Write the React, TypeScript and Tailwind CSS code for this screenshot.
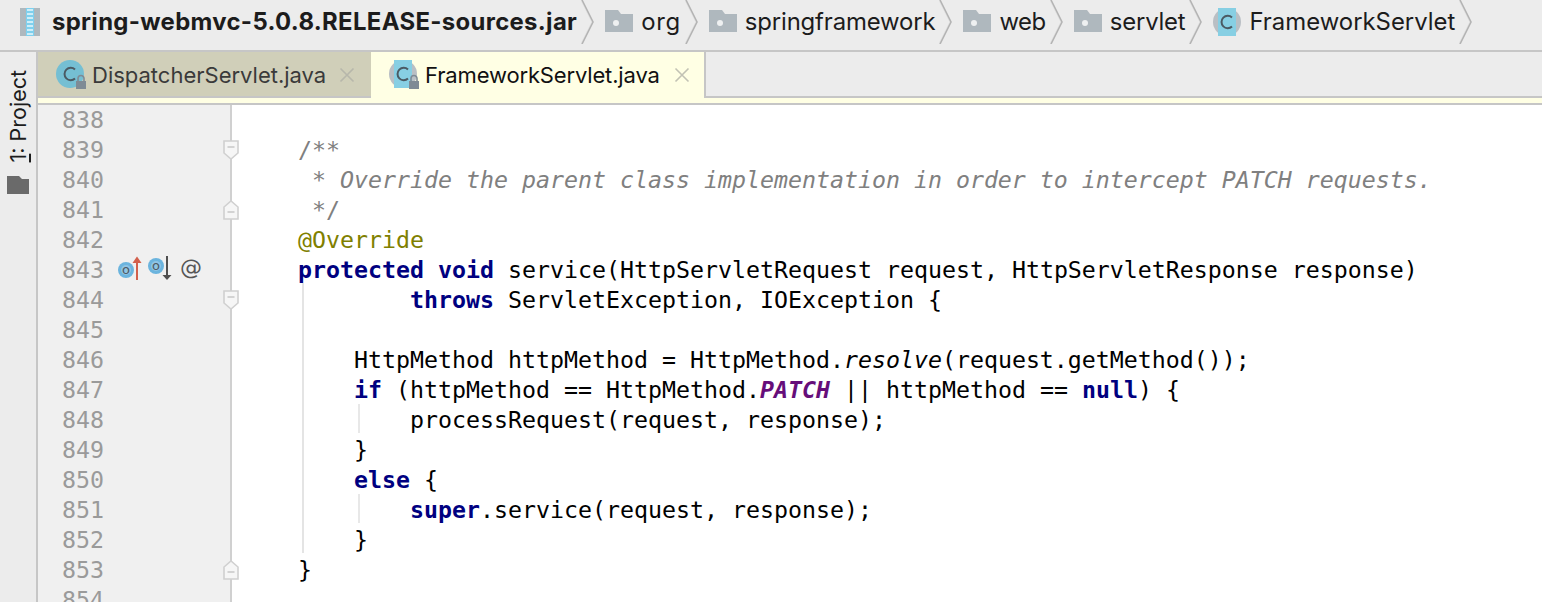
const mono = "font-['DejaVu_Sans_Mono',monospace]";

type Seg = { t: string; c?: string };

const kw = 'font-bold text-[#000080]';
const cm = 'italic text-[#808080]';

const lines: Seg[][] = [
  [],
  [{ t: '    /**', c: 'text-[#808080]' }],
  [{ t: '     * Override the parent class implementation in order to intercept PATCH requests.', c: cm }],
  [{ t: '     */', c: 'text-[#808080]' }],
  [{ t: '    @Override', c: 'text-[#808000]' }],
  [{ t: '    ' }, { t: 'protected void', c: kw }, { t: ' service(HttpServletRequest request, HttpServletResponse response)' }],
  [{ t: '            ' }, { t: 'throws', c: kw }, { t: ' ServletException, IOException {' }],
  [],
  [{ t: '        HttpMethod httpMethod = HttpMethod.' }, { t: 'resolve', c: 'italic' }, { t: '(request.getMethod());' }],
  [{ t: '        ' }, { t: 'if', c: kw }, { t: ' (httpMethod == HttpMethod.' }, { t: 'PATCH', c: 'font-bold italic text-[#660e7a]' }, { t: ' || httpMethod == ' }, { t: 'null', c: kw }, { t: ') {' }],
  [{ t: '            processRequest(request, response);' }],
  [{ t: '        }' }],
  [{ t: '        ' }, { t: 'else', c: kw }, { t: ' {' }],
  [{ t: '            ' }, { t: 'super', c: kw }, { t: '.service(request, response);' }],
  [{ t: '        }' }],
  [{ t: '    }' }],
  [],
];

const ClassIcon = ({ half = false }: { half?: boolean }) => (
  <svg width="36" height="32" viewBox="0 0 36 32" className="shrink-0 mt-[2px]">
    {half ? (
      <>
        <circle cx="14" cy="14" r="14" fill="#b9bfc4" />
        <rect x="5" y="0" width="18" height="28" fill="#87cfe3" />
      </>
    ) : (
      <circle cx="14" cy="14" r="14" fill="#75bfd3" />
    )}
    <path d="M19 9.500a6.200 6.200 0 1 0 0 9" fill="none" stroke="#4b5a63" strokeWidth="2" />
    <rect x="20" y="21" width="10" height="8" fill="#7f8b95" />
    <path d="M22 21v-2.500a3 3 0 0 1 6 0V21" fill="none" stroke="#7f8b95" strokeWidth="1.6" />
  </svg>
);

const PlainClassIcon = () => (
  <svg width="28" height="28" viewBox="0 0 28 28" className="shrink-0">
    <circle cx="14" cy="14" r="14" fill="#b9bfc4" />
    <rect x="5" y="0" width="18" height="28" fill="#87cfe3" />
    <path d="M19 9.500a6.200 6.200 0 1 0 0 9" fill="none" stroke="#4b5a63" strokeWidth="2" />
  </svg>
);

const FolderIcon = () => (
  <svg width="28" height="22" viewBox="0 0 28 22" className="shrink-0 mb-[2px]">
    <path d="M0 0h13l3 4h12v18H0z" fill="#afb8be" />
    <circle cx="11" cy="13" r="3" fill="#eef0f1" />
  </svg>
);

const Chevron = () => (
  <svg width="14" height="44" viewBox="0 0 14 44" className="shrink-0 self-start ml-[-4px] mr-[2px]">
    <path d="M1 0l11 22L1 44" fill="none" stroke="#e2e2e2" strokeWidth="1.2" transform="translate(-1 0)" />
    <path d="M1 0l11 22L1 44" fill="none" stroke="#b4b4b4" strokeWidth="1.6" />
  </svg>
);

const CloseX = ({ color }: { color: string }) => (
  <svg width="16" height="16" viewBox="0 0 16 16" className="shrink-0">
    <path d="M1.500 1.500l13 13M14.500 1.500l-13 13" stroke={color} strokeWidth="1.6" />
  </svg>
);

const Crumb = ({ icon, label, className }: { icon: React.ReactNode; label: string; className?: string }) => (
  <>
    {icon}
    <span className={`text-[#1c1c1c] ${className ?? ''}`}>{label}</span>
    <Chevron />
  </>
);

const FoldMark = ({ up, top }: { up?: boolean; top: string }) => (
  <svg width="16" height="20" viewBox="0 0 16 20" className={`absolute left-[185px] ${top}`}>
    <path
      d={up ? 'M1 19V7l7-6 7 6v12z' : 'M1 1v12l7 6 7-6V1z'}
      fill="#f6f6f6"
      stroke="#d0d0d0"
      strokeWidth="1.6"
    />
    <path d={up ? 'M4.500 12h7' : 'M4.500 7h7'} stroke="#c4c4c4" strokeWidth="1.4" />
  </svg>
);

const GutterIcons = () => (
  <div className="flex items-center absolute left-[80px] top-0 h-[30px]">
    <svg width="66" height="30" viewBox="0 0 66 30">
      <circle cx="8" cy="15" r="8" fill="#6bb4de" />
      <circle cx="8" cy="15" r="5" fill="#8fc4e4" />
      <text x="8" y="19" fontSize="13" fill="#4d5a63" textAnchor="middle" fontFamily="DejaVu Sans">o</text>
      <path d="M19 25V7" stroke="#d2604c" strokeWidth="2" />
      <path d="M14.500 8L19 1.500 23.500 8z" fill="#d2604c" />
      <circle cx="38" cy="11" r="8" fill="#6bb4de" />
      <circle cx="38" cy="11" r="5" fill="#8fc4e4" />
      <text x="38" y="15" fontSize="13" fill="#4d5a63" textAnchor="middle" fontFamily="DejaVu Sans">o</text>
      <path d="M49 1v20" stroke="#4f4f4f" strokeWidth="2" />
      <path d="M44.500 20L49 25l4.500-5z" fill="#4f4f4f" />
    </svg>
    <span className="font-['DejaVu_Sans',sans-serif] text-[22px] leading-[30px] text-[#555555] ml-[-4px] mt-[-4px]">@</span>
  </div>
);

export default function App() {
  return (
    <div className="flex flex-col h-[602px] w-[1542px] overflow-hidden bg-white font-['Inter',sans-serif]">
      {/* Breadcrumbs */}
      <div className="flex items-center h-[44px] shrink-0 pl-[20px] pb-[6px] gap-[8px] text-[23.9px] bg-[#ececec] border-b-2 border-[#c6c6c6] box-content">
        <svg width="20" height="28" viewBox="0 0 20 28" className="shrink-0 mr-[4px]">
          <rect width="20" height="28" fill="#aeb8be" />
          <rect x="6" width="8" height="28" fill="#7fd0ee" />
          <path d="M7 2h6M7 6h6M7 10h6M7 14h6M7 18h6M7 22h6M7 26h6" stroke="#eaf7fc" strokeWidth="1.5" />
        </svg>
        <Crumb icon={null} label="spring-webmvc-5.0.8.RELEASE-sources.jar" className="font-bold tracking-[0.33px]" />
        <Crumb icon={<FolderIcon />} label="org" className="tracking-[0.7px]" />
        <Crumb icon={<FolderIcon />} label="springframework" className="tracking-[-0.15px]" />
        <Crumb icon={<FolderIcon />} label="web" className="tracking-[-0.4px]" />
        <Crumb icon={<FolderIcon />} label="servlet" className="tracking-[-0.2px]" />
        <Crumb icon={<PlainClassIcon />} label="FrameworkServlet" />
      </div>

      <div className="flex flex-1 min-h-0">
        {/* Tool window strip */}
        <div className="w-[38px] shrink-0 bg-[#ececec] border-r-2 border-[#c6c6c6] flex flex-col items-center pt-[18px] gap-[14px]">
          <span className="text-[#1c1c1c] text-[21.5px] leading-[24px] [writing-mode:vertical-rl] rotate-180">
            <span className="underline">1</span>: Project
          </span>
          <svg width="22" height="18" viewBox="0 0 22 18">
            <path d="M0 0h12l3 3h7v15H0z" fill="#6a6a6a" />
          </svg>
        </div>

        <div className="flex flex-col flex-1 min-w-0">
          {/* Tabs */}
          <div className="h-[46px] shrink-0 flex bg-[#ececec]">
            <div className="w-[333px] flex items-center pl-[18px] pt-[2px] bg-[#d0cfb9] border-b-2 border-[#c6c6c6] text-[22px] text-[#3a3a3a]">
              <ClassIcon />
              <span>DispatcherServlet.java</span>
              <span className="ml-[13px]"><CloseX color="#b7b7ab" /></span>
            </div>
            <div className="w-[333px] flex items-center pl-[18px] bg-[#ffffe4] text-[22px] text-[#111]">
              <ClassIcon half />
              <span className="tracking-[-0.15px]">FrameworkServlet.java</span>
              <span className="ml-[14px]"><CloseX color="#c2c2b4" /></span>
            </div>
            <div className="flex-1 border-l-2 border-b-2 border-[#c6c6c6]" />
          </div>
          <div className="h-[5px] shrink-0 bg-[#ffffe4] border-b-2 border-[#c6c6c6] box-content" />

          {/* Editor */}
          <div className={`flex flex-1 min-h-0 ${mono} text-[23.25px] leading-[30px]`}>
            <div className="relative w-[194px] shrink-0 bg-[#f0f0f0] border-r-2 border-[#d0d0d0]">
              {lines.map((_, i) => (
                <div key={i} className="relative h-[30px] pl-[24px] text-[#9a9a9a]">
                  {838 + i}
                  {i === 5 && <GutterIcons />}
                </div>
              ))}
              <FoldMark top="top-[35px]" />
              <FoldMark up top="top-[95px]" />
              <FoldMark top="top-[185px]" />
              <FoldMark up top="top-[455px]" />
            </div>
            <div className="relative flex-1 pl-[10px] text-black whitespace-pre">
              <div className="absolute left-[70px] top-[178px] h-[270px] w-[2px] bg-[#e4e4e4]" />
              <div className="absolute left-[126px] top-[299px] h-[29px] w-[2px] bg-[#e8e8e8]" />
              <div className="absolute left-[126px] top-[389px] h-[29px] w-[2px] bg-[#e8e8e8]" />
              {lines.map((segs, i) => (
                <div key={i} className="relative h-[30px]">
                  {segs.map((s, j) => (
                    <span key={j} className={s.c}>{s.t}</span>
                  ))}
                </div>
              ))}
            </div>
          </div>
        </div>
      </div>
    </div>
  );
}
